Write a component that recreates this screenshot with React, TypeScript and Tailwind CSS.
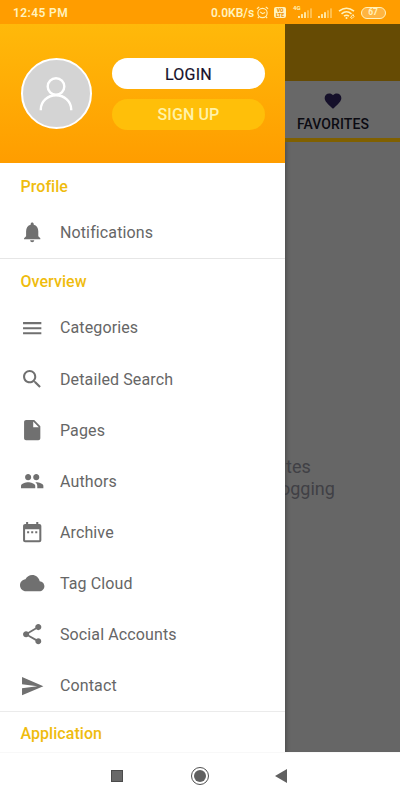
import React from "react";

const icons = {
  bell: "M12 22c1.1 0 2-.9 2-2h-4c0 1.1.89 2 2 2zm6-6v-5c0-3.07-1.64-5.64-4.5-6.32V4c0-.83-.67-1.5-1.5-1.5s-1.5.67-1.5 1.5v.68C7.63 5.36 6 7.92 6 11v5l-2 2v1h16v-1l-2-2z",
  menu: "M3 18h18v-2H3v2zm0-5h18v-2H3v2zm0-7v2h18V6H3z",
  search:
    "M15.5 14h-.79l-.28-.27C15.41 12.59 16 11.11 16 9.5 16 5.91 13.09 3 9.5 3S3 5.91 3 9.5 5.91 16 9.5 16c1.61 0 3.09-.59 4.23-1.57l.27.28v.79l5 4.99L20.49 19l-4.99-5zm-6 0C7.01 14 5 11.99 5 9.5S7.01 5 9.5 5 14 7.01 14 9.5 11.99 14 9.5 14z",
  page: "M6 2c-1.1 0-1.99.9-1.99 2L4 20c0 1.1.89 2 1.99 2H18c1.1 0 2-.9 2-2V8l-6-6H6zm7 7V3.5L18.5 9H13z",
  group:
    "M16 11c1.66 0 2.99-1.34 2.99-3S17.66 5 16 5s-3 1.34-3 3 1.34 3 3 3zm-8 0c1.66 0 2.99-1.34 2.99-3S9.66 5 8 5 5 6.34 5 8s1.34 3 3 3zm0 2c-2.33 0-7 1.17-7 3.5V19h14v-2.5c0-2.33-4.67-3.5-7-3.5zm8 0c-.29 0-.62.02-.97.05 1.16.84 1.97 1.97 1.97 3.45V19h6v-2.5c0-2.33-4.67-3.5-7-3.5z",
  calendar:
    "M9 11H7v2h2v-2zm4 0h-2v2h2v-2zm4 0h-2v2h2v-2zm2-7h-1V2h-2v2H8V2H6v2H5c-1.11 0-1.99.9-1.99 2L3 20c0 1.1.89 2 2 2h14c1.1 0 2-.9 2-2V6c0-1.1-.9-2-2-2zm0 16H5V9h14v11z",
  cloud:
    "M19.35 10.04C18.67 6.59 15.64 4 12 4 9.11 4 6.6 5.64 5.35 8.04 2.34 8.36 0 10.91 0 14c0 3.31 2.69 6 6 6h13c2.76 0 5-2.24 5-5 0-2.64-2.05-4.78-4.65-4.96z",
  share:
    "M18 16.08c-.76 0-1.44.3-1.96.77L8.91 12.7c.05-.23.09-.46.09-.7s-.04-.47-.09-.7l7.05-4.11c.54.5 1.25.81 2.04.81 1.66 0 3-1.34 3-3s-1.34-3-3-3-3 1.34-3 3c0 .24.04.47.09.7L8.04 9.81C7.5 9.31 6.79 9 6 9c-1.66 0-3 1.34-3 3s1.34 3 3 3c.79 0 1.5-.31 2.04-.81l7.12 4.16c-.05.21-.08.43-.08.65 0 1.61 1.31 2.92 2.92 2.92s2.92-1.31 2.92-2.92-1.31-2.92-2.92-2.92z",
  send: "M2.01 21L23 12 2.01 3 2 10l15 2-15 2z",
  heart:
    "M12 21.35l-1.45-1.32C5.4 15.36 2 12.28 2 8.5 2 5.42 4.42 3 7.5 3c1.74 0 3.41.81 4.5 2.09C13.09 3.81 14.76 3 16.5 3 19.58 3 22 5.42 22 8.5c0 3.78-3.4 6.86-8.55 11.54L12 21.35z",
};

type IconName = keyof typeof icons;

function Icon({ name, className }: { name: IconName; className: string }) {
  return (
    <svg viewBox="0 0 24 24" fill="currentColor" className={className}>
      <path d={icons[name]} />
    </svg>
  );
}

function Row({ icon, label }: { icon: IconName; label: string }) {
  return (
    <li className="flex h-[51.15px] items-center pl-[20.3px]">
      <Icon name={icon} className="size-[24.4px] shrink-0 text-[#707070]" />
      <span className="ml-[15.3px] pt-[1.4px] text-[16px] leading-5 tracking-[0.12px] text-[#666666]">{label}</span>
    </li>
  );
}

function SectionTitle({ children }: { children: string }) {
  return (
    <h2 className="flex h-[44px] items-center pt-[4px] pl-[20.5px] text-[16px] font-medium tracking-[0.05px] text-[#efbc0e]">
      {children}
    </h2>
  );
}

function Signal() {
  return (
    <svg viewBox="0 0 15 10" className="h-[10px] w-[15px]" fill="currentColor">
      {[0, 1, 2, 3, 4].map((i) => (
        <rect key={i} x={i * 3} y={8 - i * 1.9} width="2" height={2 + i * 1.9} opacity={i >= 3 ? 0.4 : 0.85} />
      ))}
    </svg>
  );
}

function StatusBar() {
  return (
    <header className="flex h-6 shrink-0 items-center bg-[#ff9d00] pt-px pl-[13px] text-[#fff2bd]">
      <span className="w-[198px] text-[12px] font-semibold tracking-[0.4px]">12:45 PM</span>
      <span className="w-[45px] text-[12px] font-semibold whitespace-nowrap">0.0KB/s</span>
      <svg viewBox="0 0 14 14" className="size-[13px]" fill="none" stroke="currentColor" strokeWidth="1.2">
        <circle cx="7" cy="7.5" r="5" />
        <path d="M4.5 6.3L7 8.3l2.8-1.2M1 3l2.5-2M13 3l-2.5-2M3.3 11.5L2 13M10.7 11.5L12 13" />
      </svg>
      <span className="ml-[5px] flex h-[11px] w-3 flex-col items-center justify-center rounded-[2px] bg-[#fff2bd] text-[5px] leading-[5px] font-black text-[#f08f00]">
        <span>VO</span>
        <span>LTE</span>
      </span>
      <span className="ml-[7px] self-start pt-[4px] text-[6px] leading-[6px] font-bold">4G</span>
      <span className="-ml-[3px]">
        <Signal />
      </span>
      <span className="ml-[5px]">
        <Signal />
      </span>
      <svg viewBox="0 0 18 14" className="ml-[5px] h-[14px] w-[18px]" fill="none" stroke="currentColor" strokeWidth="1.6">
        <path d="M1 5.2Q8.5-.8 16 5.2M3.5 7.8Q8.5 3.8 13.5 7.8M6 10.2Q8.5 8.3 11 10.2" />
        <circle cx="8.5" cy="12" r="1" fill="currentColor" stroke="none" />
        <path d="M12.5 11.5l2.5-3 1 2-2 2z" strokeWidth="1" />
      </svg>
      <span className="ml-[5px] flex h-3 w-[25px] items-center justify-center rounded-full border border-[#fff2bd] bg-[#ffb440] text-[8.5px] leading-none font-bold">
        67
      </span>
    </header>
  );
}

function Drawer() {
  return (
    <aside className="flex w-[285px] shrink-0 flex-col overflow-hidden bg-white">
      <div className="flex h-[139px] shrink-0 bg-linear-to-b from-[#ffb90a] to-[#ff9d00] pt-[33.5px] pl-[20.5px]">
        <div className="flex size-[71.5px] items-center justify-center rounded-full border-[2.5px] border-white bg-[#d4d4d4]">
          <svg viewBox="0 0 36 36" className="mt-[2px] size-9" fill="none" stroke="white" strokeWidth="2.4">
            <circle cx="18" cy="10.5" r="8.3" />
            <path d="M2.8 34.3v-1a15.2 14 0 0 1 30.4 0v1" />
          </svg>
        </div>
        <div className="ml-5 flex w-[153px] flex-col gap-[10px] pt-[0.5px] text-[16px] font-medium">
          <button className="h-[31px] rounded-full bg-white pt-[2px] font-normal tracking-[0.25px] text-[#15102a] [-webkit-text-stroke:0.2px]">
            LOGIN
          </button>
          <button className="h-[31px] rounded-full bg-[#ffbf09] pt-[1px] tracking-[0.1px] text-[#fff2a8]">SIGN UP</button>
        </div>
      </div>
      <nav>
        <SectionTitle>Profile</SectionTitle>
        <ul className="border-b border-[#e6e6e6]">
          <Row icon="bell" label="Notifications" />
        </ul>
        <div className="-mt-px">
          <SectionTitle>Overview</SectionTitle>
        </div>
        <ul className="border-b border-[#ebebeb]">
          <Row icon="menu" label="Categories" />
          <Row icon="search" label="Detailed Search" />
          <Row icon="page" label="Pages" />
          <Row icon="group" label="Authors" />
          <Row icon="calendar" label="Archive" />
          <Row icon="cloud" label="Tag Cloud" />
          <Row icon="share" label="Social Accounts" />
          <Row icon="send" label="Contact" />
        </ul>
        <div className="-mt-[2px]">
          <SectionTitle>Application</SectionTitle>
        </div>
      </nav>
    </aside>
  );
}

function DimmedPage() {
  return (
    <main className="min-w-0 flex-1 overflow-hidden bg-[#666666] shadow-[inset_4px_0_4px_-3px_rgba(0,0,0,0.3)]">
      <div className="h-[57px] bg-[#664b04]" />
      <div className="flex h-[61px] flex-col items-center border-b-4 border-[#806000] bg-[#686868] pt-[10px] pr-[19px]">
        <Icon name="heart" className="size-5 text-[#15102a]" />
        <span className="mt-[3px] text-[14px] leading-5 font-medium tracking-[0.1px] text-[#0c0b12]">FAVORITES</span>
      </div>
      <div className="mt-[314px] text-[18px] leading-[22px] text-[#404045]">
        <p className="pl-[1px]">tes</p>
        <p className="-ml-[5px]">ogging</p>
      </div>
    </main>
  );
}

function NavigationBar() {
  return (
    <footer className="flex h-12 shrink-0 items-center border-t border-[#f8f8f8] bg-white pb-[2px] pl-[111px] text-[#606060]">
      <span className="size-3 border border-[#4b4b4b] bg-[#686868]" />
      <span className="ml-[68px] flex size-[18px] items-center justify-center rounded-full border-[1.5px] border-[#505050]">
        <span className="size-3 rounded-full bg-[#606060]" />
      </span>
      <svg viewBox="0 0 12 14" className="ml-[66px] h-[14px] w-3" fill="currentColor">
        <path d="M12 0v14L0 7z" />
      </svg>
    </footer>
  );
}

export default function App() {
  return (
    <div className="flex h-[800px] w-[400px] flex-col overflow-hidden bg-white font-[Roboto,sans-serif]">
      <StatusBar />
      <div className="flex h-[728px] shrink-0 overflow-hidden">
        <Drawer />
        <DimmedPage />
      </div>
      <NavigationBar />
    </div>
  );
}
